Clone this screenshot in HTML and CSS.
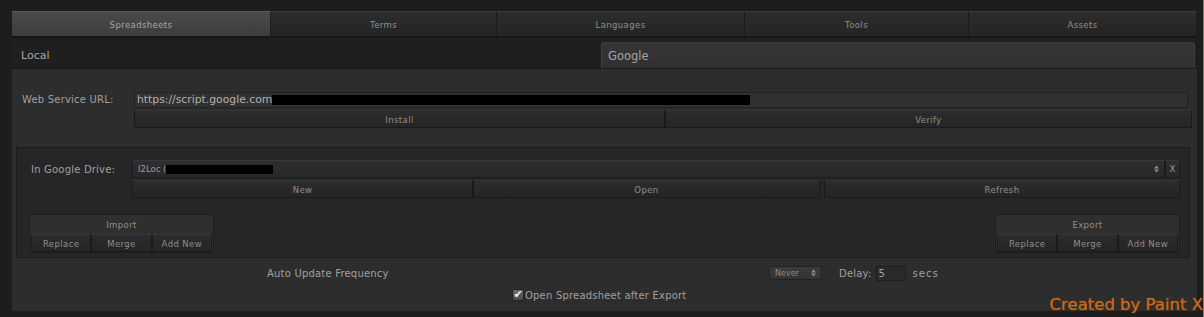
FILE: index.html
```html
<!DOCTYPE html>
<html lang="en">
<head>
    <meta charset="UTF-8">
    <title>Localization - Spreadsheets</title>
    <link rel="stylesheet" href="styles.css">
</head>
<body>

    <!-- Main Tabs -->
    <div class="tabs">
        <div class="tab active" style="width: 259px;">Spreadsheets</div>
        <div class="tab" style="width: 226px;">Terms</div>
        <div class="tab" style="width: 248px;">Languages</div>
        <div class="tab" style="width: 224px;">Tools</div>
        <div class="tab" style="width: 228px;">Assets</div>
    </div>

    <!-- Source Switch -->
    <div class="source-row">
        <div class="source local">Local</div>
        <div class="source google">Google</div>
    </div>

    <!-- Google Panel -->
    <div class="panel">
        <div class="url-row">
            <div class="label url-label">Web Service URL:</div>
            <div class="url-field">
                <div class="text-input">https://script.google.com<span class="redact url-redact"></span></div>
                <div class="btn-row">
                    <div class="btn" style="width: 531px;">Install</div>
                    <div class="btn" style="flex: 1;">Verify</div>
                </div>
            </div>
        </div>

        <div class="drive-box">
            <div class="drive-row">
                <div class="label drive-label">In Google Drive:</div>
                <div class="drive-field">
                    <div class="select-row">
                        <div class="drive-select">
                            <span>I2Loc (</span><span class="redact drive-redact"></span>
                            <svg class="arrows" width="5" height="8" viewBox="0 0 5 8"><path d="M0 3.5 L2.5 0.5 L5 3.5 Z M0 4.5 L2.5 7.5 L5 4.5 Z" fill="#8a8a8a"/></svg>
                        </div>
                        <div class="clear-btn">X</div>
                    </div>
                    <div class="btn-row">
                        <div class="btn" style="width: 341px;">New</div>
                        <div class="btn" style="width: 347px;">Open</div>
                        <div class="btn refresh" style="flex: 1;">Refresh</div>
                    </div>
                </div>
            </div>

            <div class="sync-row">
                <div class="sync-box">
                    <div class="sync-title">Import</div>
                    <div class="sync-buttons">
                        <div class="btn">Replace</div>
                        <div class="btn">Merge</div>
                        <div class="btn">Add New</div>
                    </div>
                </div>
                <div class="sync-box">
                    <div class="sync-title">Export</div>
                    <div class="sync-buttons">
                        <div class="btn">Replace</div>
                        <div class="btn">Merge</div>
                        <div class="btn">Add New</div>
                    </div>
                </div>
            </div>
        </div>

        <div class="freq-row">
            <div class="label freq-label">Auto Update Frequency</div>
            <div class="mini-select">Never <svg width="5" height="8" viewBox="0 0 5 8"><path d="M0 3.5 L2.5 0.5 L5 3.5 Z M0 4.5 L2.5 7.5 L5 4.5 Z" fill="#8a8a8a"/></svg></div>
            <div class="label delay-label">Delay:</div>
            <div class="delay-input">5</div>
            <div class="label secs">secs</div>
        </div>

        <div class="check-row">
            <span class="checkbox">&#10004;</span>
            <span class="label">Open Spreadsheet after Export</span>
        </div>

        <div class="watermark">Created by Paint X</div>
    </div>

</body>
</html>
```

FILE: styles.css
```css
body {
    margin: 0;
    padding: 11px 0 5px 12px;
    background-color: #1d1d1d;
    font-family: "DejaVu Sans", Verdana, sans-serif;
    color: #9c9c9c;
    border-right: 1px solid #a8742e;
    box-sizing: border-box;
    height: 317px;
    overflow: hidden;
}

/* Tabs */
.tabs {
    display: flex;
    height: 26px;
}

.tab {
    box-sizing: border-box;
    display: flex;
    align-items: center;
    justify-content: center;
    padding-top: 2px;
    font-size: 8.5px;
    letter-spacing: 0.4px;
    color: #8e8e8e;
    background: linear-gradient(#2d2d2d, #242424);
    border-top: 1px solid #3a3a3a;
    border-right: 1px solid #1b1b1b;
    border-bottom: 1px solid #171717;
}

.tab.active {
    background: linear-gradient(#4a4a4a, #3d3d3d);
    border-top: 1px solid #5a5a5a;
    color: #a6a6a6;
}

/* Local / Google */
.source-row {
    display: flex;
    height: 31px;
    width: 1185px;
    background-color: #1f1f1f;
    border-top: 1px solid #151515;
    box-sizing: border-box;
}

.source {
    box-sizing: border-box;
    font-size: 11px;
    color: #a4a4a4;
    display: flex;
    align-items: center;
}

.local {
    width: 589px;
    padding: 4px 0 0 9px;
}

.google {
    flex: 1;
    margin: 4px 2px 0 0;
    padding: 0 0 0 6px;
    background: linear-gradient(#363636, #303030);
    border: 1px solid #3e3e3e;
    border-bottom: none;
    border-radius: 3px 3px 0 0;
    font-size: 11.5px;
}

/* Panel */
.panel {
    position: relative;
    width: 1185px;
    height: 243px;
    background-color: #2d2d2d;
    border-top: 1px solid #181818;
    box-sizing: border-box;
    padding-top: 23px;
}

.label {
    font-size: 10px;
    color: #a0a0a0;
    letter-spacing: 0.2px;
}

.url-row {
    display: flex;
}

.url-label {
    width: 112px;
    padding: 2px 0 0 10px;
}

.url-field {
    width: 1058px;
}

.text-input {
    height: 16px;
    width: 1054px;
    box-sizing: border-box;
    background-color: #313131;
    border: 1px solid #222;
    font-size: 10.8px;
    color: #b0b0b0;
    padding-left: 2px;
    display: flex;
    align-items: center;
    line-height: 14px;
}

.redact {
    display: inline-block;
    background-color: #000;
}

.url-redact {
    width: 478px;
    height: 10px;
}

.btn-row {
    display: flex;
    margin-top: 2px;
    height: 18px;
}

.btn {
    box-sizing: border-box;
    display: flex;
    align-items: center;
    justify-content: center;
    padding-top: 1px;
    font-size: 8.5px;
    letter-spacing: 0.4px;
    color: #8e8e8e;
    background: linear-gradient(#2c2c2c, #252525);
    border: 1px solid #1a1a1a;
    border-top-color: #363636;
}

/* Google Drive box */
.drive-box {
    margin: 19px 0 0 4px;
    width: 1174px;
    height: 111px;
    box-sizing: border-box;
    background-color: #262626;
    border: 1px solid #1c1c1c;
    padding-top: 12px;
}

.drive-row {
    display: flex;
}

.drive-label {
    width: 101px;
    padding: 4px 0 0 14px;
}

.drive-field {
    width: 1048px;
}

.select-row {
    display: flex;
    height: 18px;
}

.drive-select {
    flex: 1;
    box-sizing: border-box;
    display: flex;
    align-items: center;
    padding-left: 5px;
    font-size: 8.5px;
    color: #9a9a9a;
    background: linear-gradient(#2e2e2e, #282828);
    border: 1px solid #1a1a1a;
    border-top-color: #383838;
}

.drive-redact {
    width: 107px;
    height: 9px;
}

.drive-select .arrows {
    margin-left: auto;
    margin-right: 5px;
}

.clear-btn {
    width: 15px;
    box-sizing: border-box;
    display: flex;
    align-items: center;
    justify-content: center;
    font-size: 8.5px;
    color: #9a9a9a;
    background: linear-gradient(#2e2e2e, #282828);
    border: 1px solid #1a1a1a;
    border-top-color: #383838;
}

.refresh {
    margin-left: 4px;
}

.sync-row {
    display: flex;
    justify-content: space-between;
    margin: 16px 9px 0 12px;
}

.sync-box {
    width: 185px;
    height: 39px;
    box-sizing: border-box;
    background-color: #2f2f2f;
    border: 1px solid #1f1f1f;
    padding: 0 1px;
}

.sync-title {
    height: 19px;
    display: flex;
    align-items: center;
    justify-content: center;
    padding-top: 1px;
    box-sizing: border-box;
    font-size: 8.5px;
    letter-spacing: 0.4px;
    color: #8e8e8e;
}

.sync-buttons {
    display: flex;
    height: 18px;
}

.sync-buttons .btn {
    flex: 1;
}

/* Auto update */
.freq-row {
    display: flex;
    align-items: center;
    margin-top: 8px;
    height: 14px;
}

.freq-label {
    width: 502px;
    padding-left: 255px;
}

.mini-select {
    box-sizing: border-box;
    width: 53px;
    height: 14px;
    display: flex;
    align-items: center;
    justify-content: space-between;
    padding: 0 5px 0 5px;
    font-size: 8px;
    color: #8a8a8a;
    background: linear-gradient(#3c3c3c, #333);
    border: 1px solid #222;
    border-radius: 3px;
}

.delay-label {
    margin-left: 17px;
}

.delay-input {
    box-sizing: border-box;
    width: 30px;
    height: 15px;
    margin-left: 4px;
    padding-left: 2px;
    font-size: 10px;
    color: #a0a0a0;
    background-color: #2a2a2a;
    border: 1px solid #1e1e1e;
    line-height: 13px;
}

.secs {
    margin-left: 7px;
    letter-spacing: 1px;
}

.check-row {
    display: flex;
    align-items: center;
    margin: 9px 0 0 500px;
}

.checkbox {
    box-sizing: border-box;
    width: 12px;
    height: 12px;
    background: linear-gradient(#6a6a6a, #4a4a4a);
    border: 1px solid #222;
    border-radius: 2px;
    font-size: 11px;
    line-height: 9px;
    color: #f0f0f0;
    text-align: center;
    margin-right: 1px;
}

/* Watermark over the panel corner */
.watermark {
    position: absolute;
    right: -6px;
    bottom: -3px;
    font-family: "DejaVu Sans", sans-serif;
    font-size: 16.5px;
    color: #d2641e;
    text-shadow: 0 0 1px #8a6a1a;
}
```
